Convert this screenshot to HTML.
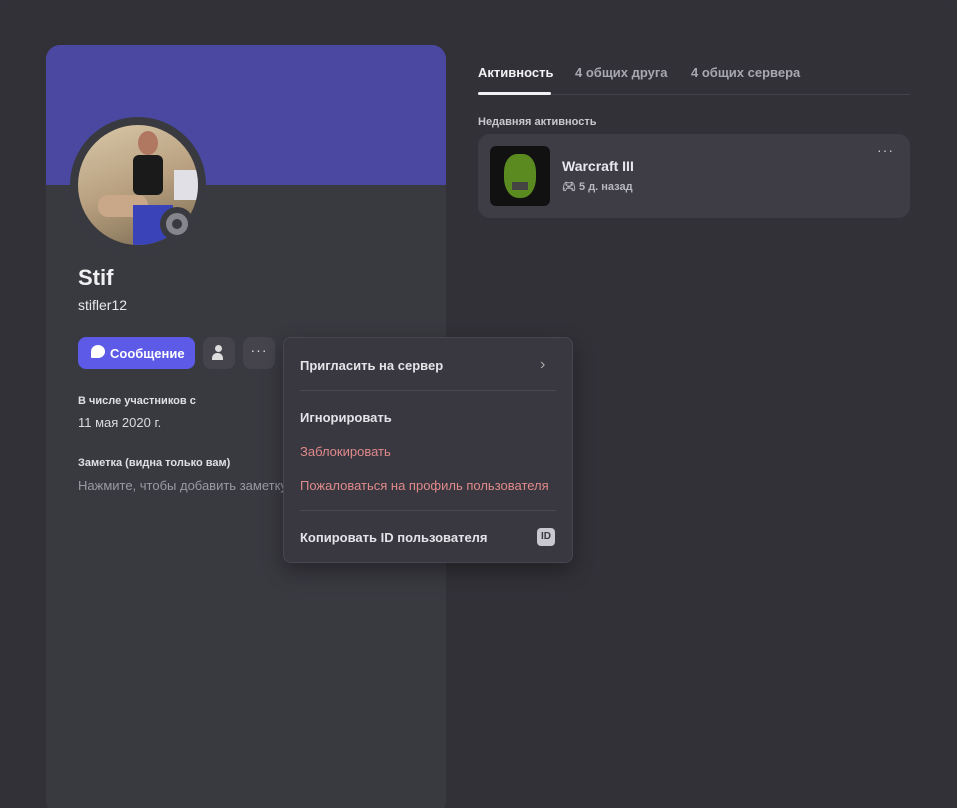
<!DOCTYPE html>
<html><head><meta charset="utf-8"><style>
*{margin:0;padding:0;box-sizing:border-box}
html,body{width:957px;height:808px;background:#323138;overflow:hidden}
body{font-family:"Liberation Sans","Noto Sans CJK SC",sans-serif;position:relative}
.win{position:absolute;left:0;top:0;width:957px;height:808px;background:#323138;border-radius:10px 10px 0 0}
.card{position:absolute;left:46px;top:45px;width:400px;height:770px;background:#393940;border-radius:14px;overflow:hidden}
.banner{height:140px;background:#4a48a0}
.av{position:absolute;left:24px;top:72px;width:136px;height:136px;border-radius:50%;background:#393940}
.pic{position:absolute;left:8px;top:8px;width:120px;height:120px;border-radius:50%;background:linear-gradient(160deg,#d8c8a8,#b8a080 50%,#7a6a50);overflow:hidden}
.st{position:absolute;left:90px;top:90px;width:34px;height:34px;border-radius:50%;background:#393940}
.st:after{content:"";position:absolute;left:6px;top:6px;width:22px;height:22px;border-radius:50%;border:6px solid #84858d;box-sizing:border-box}
.t{position:absolute;white-space:nowrap}
.btn{position:absolute;height:32px;border-radius:8px}
.menu{position:absolute;left:283px;top:337px;width:290px;height:226px;background:#393840;border:1px solid #48474f;border-radius:8px;box-shadow:0 8px 20px rgba(0,0,0,.35)}
.mi{position:absolute;left:16px;font-size:13px;font-weight:bold;color:#e4e4e8}
.sep{position:absolute;left:16px;right:16px;height:1px;background:#4a4951}
</style></head><body><div class="win">
<div class="card"><div class="banner"></div>
<div class="av"><div class="pic">
<div style="position:absolute;left:55px;top:30px;width:30px;height:40px;background:#1a1a1a;border-radius:6px"></div>
<div style="position:absolute;left:60px;top:6px;width:20px;height:24px;background:#b07860;border-radius:50%"></div>
<div style="position:absolute;left:20px;top:70px;width:50px;height:22px;background:#c8a888;border-radius:10px"></div>
<div style="position:absolute;left:55px;top:80px;width:40px;height:40px;background:#3a44b8"></div>
<div style="position:absolute;left:96px;top:45px;width:24px;height:30px;background:#e0e0e6"></div>
</div><div class="st"></div></div>
<div class="t" style="left:32px;top:220px;font-size:22px;font-weight:bold;color:#f0f0f2">Stif</div>
<div class="t" style="left:32px;top:252px;font-size:14px;color:#e8e8ec">stifler12</div>
<div class="btn" style="left:32px;top:292px;width:117px;background:#5c5ae6;color:#fff;font-size:13px;font-weight:bold;padding:9px 0 0 32px">Сообщение</div>
<div class="t" style="left:45px;top:300px;width:14px;height:13px;background:#fff;border-radius:50% 50% 50% 10%"></div>
<div class="btn" style="left:157px;top:292px;width:32px;background:#45444c"><div style="position:absolute;left:12px;top:8px;width:7px;height:7px;border-radius:50%;background:#ddd"></div><div style="position:absolute;left:9px;top:16px;width:11px;height:7px;border-radius:5px 5px 0 0;background:#ddd"></div></div>
<div class="btn" style="left:197px;top:292px;width:32px;background:#45444c;color:#ddd;font-size:14px;text-align:center;line-height:26px;letter-spacing:1px">···</div>
<div class="t" style="left:32px;top:350px;font-size:11px;font-weight:bold;color:#e0e0e4">В числе участников с</div>
<div class="t" style="left:32px;top:370px;font-size:13px;color:#dcdce0">11 мая 2020 г.</div>
<div class="t" style="left:32px;top:412px;font-size:11px;font-weight:bold;color:#e0e0e4">Заметка (видна только вам)</div>
<div class="t" style="left:32px;top:433px;font-size:13px;color:#9a9aa2">Нажмите, чтобы добавить заметку</div>
</div>
<div class="t" style="left:478px;top:65px;font-size:13px;font-weight:bold;color:#f2f2f4">Активность</div>
<div class="t" style="left:575px;top:65px;font-size:13px;font-weight:bold;color:#a8a8b0">4 общих друга</div>
<div class="t" style="left:691px;top:65px;font-size:13px;font-weight:bold;color:#a8a8b0">4 общих сервера</div>
<div class="t" style="left:478px;top:94px;width:432px;height:1px;background:#43424a"></div>
<div class="t" style="left:478px;top:92px;width:73px;height:3px;background:#f2f2f4;border-radius:2px"></div>
<div class="t" style="left:478px;top:116px;font-size:11px;font-weight:bold;color:#c8c8ce">Недавняя активность</div>
<div class="t" style="left:478px;top:134px;width:432px;height:84px;background:#3e3d46;border-radius:12px"></div>
<div class="t" style="left:490px;top:146px;width:60px;height:60px;background:#111;border-radius:6px;overflow:hidden"><div style="position:absolute;left:14px;top:8px;width:32px;height:44px;background:#5a8a20;border-radius:40% 40% 45% 45%"></div><div style="position:absolute;left:22px;top:36px;width:16px;height:8px;background:#444"></div></div>
<div class="t" style="left:562px;top:158px;font-size:14px;font-weight:bold;color:#e8e8ec">Warcraft III</div>
<div class="t" style="left:562px;top:180px;font-size:11px;font-weight:bold;color:#b8b8c0">🎮︎ 5 д. назад</div>
<div class="t" style="left:877px;top:142px;font-size:14px;color:#c8c8ce;letter-spacing:1px">···</div>
<div class="menu">
<div class="mi" style="top:20px">Пригласить на сервер</div>
<div class="t" style="left:256px;top:18px;font-size:16px;color:#aaa">›</div>
<div class="sep" style="top:52px"></div>
<div class="mi" style="top:72px">Игнорировать</div>
<div class="mi" style="top:106px;color:#e08a8a;font-weight:normal">Заблокировать</div>
<div class="mi" style="top:140px;color:#e08a8a;font-weight:normal">Пожаловаться на профиль пользователя</div>
<div class="sep" style="top:172px"></div>
<div class="mi" style="top:192px">Копировать ID пользователя</div>
<div class="t" style="left:253px;top:190px;width:18px;height:18px;background:#c8c8ce;border-radius:4px;font-size:10px;font-weight:bold;color:#393840;text-align:center;line-height:18px">ID</div>
</div>
</div></body></html>
